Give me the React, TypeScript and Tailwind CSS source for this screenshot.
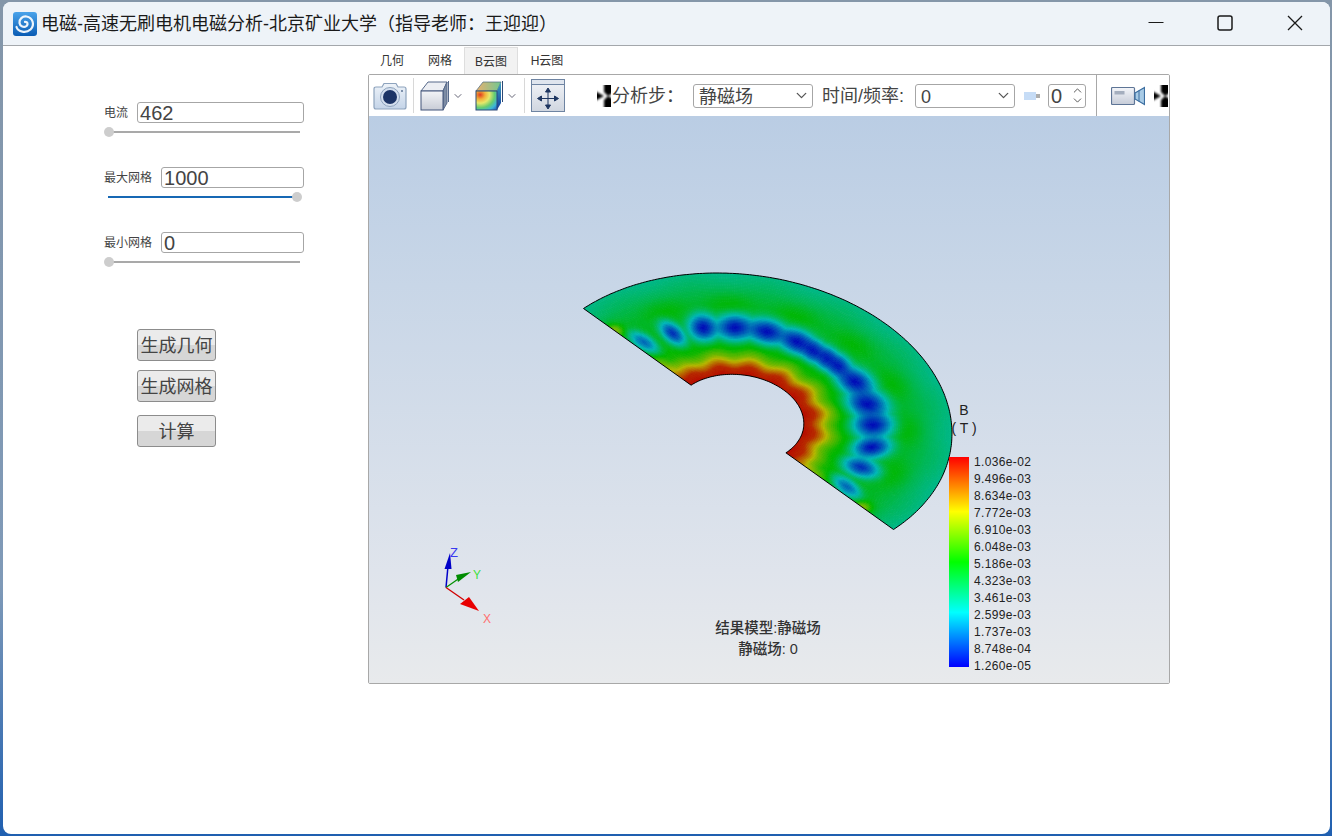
import React, { useMemo } from "react";
import { ChevronDown, ChevronUp } from "lucide-react";

const C = [738.5, 419];
const A = [155, 110.5];
const B = [146.8, -95.4];
const INNER = 0.306;

function pt(r: number, t: number): [number, number] {
  return [
    C[0] + r * (A[0] * Math.cos(t) + B[0] * Math.sin(t)),
    C[1] + r * (A[1] * Math.cos(t) + B[1] * Math.sin(t)),
  ];
}

const BLOBS: number[][] = [
  [846.7, 486.7, 15, 7.5, 35, 0.7],
  [861, 467.3, 18, 9.5, 15, 0.9],
  [871.7, 447.3, 19, 11, -6, 1],
  [872.7, 425, 20, 13, 0, 1],
  [867.3, 404, 21, 14, 14, 1],
  [855, 381.7, 20, 13, 26, 1],
  [838.3, 366, 15, 11, 35, 0.95],
  [826.7, 358.3, 14, 11, 35, 0.92],
  [813, 350.7, 15, 11, 30, 0.95],
  [796.7, 341.7, 19, 12, 20, 1],
  [766.7, 331.7, 20, 12.5, 12, 1],
  [735, 327.7, 19, 13, 3, 1],
  [703.3, 327.7, 15, 13, 25, 1],
  [672.7, 333.3, 15, 8.5, 40, 0.9],
  [644, 342.3, 15, 7, 32, 0.7],
];

const TABLE: number[][] = [
  [0.29, 0.98],
  [0.35, 0.94],
  [0.385, 0.82],
  [0.43, 0.65],
  [0.48, 0.53],
  [0.56, 0.47],
  [0.78, 0.44],
  [0.9, 0.37],
  [1.01, 0.31],
];

function lerpTable(x: number) {
  for (let i = 1; i < TABLE.length; i++) {
    if (x <= TABLE[i][0]) {
      const f = (x - TABLE[i - 1][0]) / (TABLE[i][0] - TABLE[i - 1][0]);
      return TABLE[i - 1][1] + Math.max(0, f) * (TABLE[i][1] - TABLE[i - 1][1]);
    }
  }
  return TABLE[TABLE.length - 1][1];
}

function field(r: number, t: number) {
  const wave = Math.cos(15.5 * t + 0.8);
  let v = lerpTable(r + 0.012 * wave);
  v += 0.06 * (0.5 + 0.5 * Math.cos(15.5 * t + 0.8)) * Math.exp(-Math.pow((r - 0.8) / 0.07, 2));
  const edge = Math.min(t, Math.PI - t);
  v += 0.14 * Math.exp(-Math.pow(edge / 0.07, 2)) * Math.exp(-Math.pow((r - 0.47) / 0.1, 2));
  v += 0.2 * Math.exp(-Math.pow(edge / 0.05, 2)) * Math.exp(-Math.pow((r - 0.8) / 0.04, 2));
  const [x, y] = pt(r, t);
  let halo = 1;
  let core = 1;
  for (const [bx, by, rx, ry, ang, amp] of BLOBS) {
    const c = Math.cos((ang * Math.PI) / 180);
    const s = Math.sin((ang * Math.PI) / 180);
    const dx = x - bx;
    const dy = y - by;
    const a = dx * c + dy * s;
    const b = -dx * s + dy * c;
    const d2 = (a * a) / (rx * rx) + (b * b) / (ry * ry);
    const dh2 = d2 / (1.3 * 1.3);
    halo = Math.min(halo, 1 - 0.42 * Math.exp(-dh2 * dh2));
    core *= 1 - 0.92 * amp * amp * Math.exp(-d2 / (0.8 * 0.8));
  }
  v *= halo * core;
  return Math.min(1, Math.max(0, v));
}

function jet(v: number) {
  let r = 0;
  let g = 0;
  let b = 0;
  if (v < 0.25) {
    g = v / 0.25;
    b = 1;
  } else if (v < 0.5) {
    g = 1;
    b = 1 - (v - 0.25) / 0.25;
  } else if (v < 0.75) {
    r = (v - 0.5) / 0.25;
    g = 1;
  } else {
    r = 1;
    g = 1 - (v - 0.75) / 0.25;
  }
  const L = 0.72;
  const h = (n: number) => Math.round(n * 255 * L).toString(16).padStart(2, "0");
  return `#${h(r)}${h(g)}${h(b)}`;
}

function FieldMesh() {
  const { groups, outline } = useMemo(() => {
    const NT = 260;
    const NR = 72;
    const LEVELS = 128;
    const buckets: string[] = new Array(LEVELS + 1).fill("");
    for (let i = 0; i < NT; i++) {
      const t0 = (i / NT) * Math.PI;
      const t1 = ((i + 1) / NT) * Math.PI;
      for (let j = 0; j < NR; j++) {
        const r0 = INNER + (j / NR) * (1 - INNER);
        const r1 = INNER + ((j + 1) / NR) * (1 - INNER);
        const v = field((r0 + r1) / 2, (t0 + t1) / 2);
        const q = Math.round(v * LEVELS);
        const p = [pt(r0, t0), pt(r1, t0), pt(r1, t1), pt(r0, t1)];
        buckets[q] += "M" + p.map((a) => `${a[0].toFixed(1)} ${a[1].toFixed(1)}`).join("L") + "Z";
      }
    }
    const pts: string[] = [];
    for (let i = 0; i <= 200; i++) {
      const a = pt(1, (i / 200) * Math.PI);
      pts.push(`${a[0].toFixed(1)} ${a[1].toFixed(1)}`);
    }
    for (let i = 100; i >= 0; i--) {
      const a = pt(INNER, (i / 100) * Math.PI);
      pts.push(`${a[0].toFixed(1)} ${a[1].toFixed(1)}`);
    }
    return {
      groups: buckets.map((d, q) => ({ d, c: jet(q / LEVELS) })).filter((g) => g.d),
      outline: "M" + pts.join("L") + "Z",
    };
  }, []);
  return (
    <svg className="absolute left-0 top-0" width={800} height={567} viewBox="369 116 800 567">
      <defs>
        <clipPath id="sector">
          <path d={outline} />
        </clipPath>
      </defs>
      <g clipPath="url(#sector)">
        {groups.map((g) => (
          <path key={g.c} d={g.d} fill={g.c} stroke={g.c} strokeWidth={0.7} />
        ))}
      </g>
      <path d={outline} fill="none" stroke="#000" strokeWidth={1} />
      {/* triad */}
      <path d="M446 587.5L448 566" stroke="#0000c8" strokeWidth={1.5} />
      <path d="M444.5 569L450 553L451.5 569Z" fill="#0000c8" />
      <path d="M446 587.5L461 577" stroke="#009000" strokeWidth={1.2} />
      <path d="M458 582L471 572L456 575Z" fill="#008c00" />
      <path d="M446 587.5L464 600" stroke="#d00000" strokeWidth={1.3} />
      <path d="M469 597L479 611L460 604Z" fill="#e80000" />
      <text x={450} y={557} fontSize={13} fill="#3a3af0">Z</text>
      <text x={473} y={579} fontSize={12} fill="#40e040">Y</text>
      <text x={483} y={623} fontSize={12} fill="#ff7070">X</text>
    </svg>
  );
}

function Slider({ full }: { full?: boolean }) {
  return (
    <div className="relative mt-[4px] flex h-[10px] w-[203px] items-center pl-[4px]">
      <div className={`h-[2px] ${full ? "w-[189px] bg-[#1768b4]" : "w-[192px] bg-[#a9a9a9]"}`} />
      <div className={`absolute top-0 h-[10px] w-[10px] rounded-full bg-[#cdcdcd] ${full ? "left-[188px]" : "left-0"}`} />
    </div>
  );
}

function Field({ label, value, full }: { label: string; value: string; full?: boolean }) {
  return (
    <div className="mb-[30px] w-[200px]">
      <div className="flex h-[21px] items-center gap-[9px]">
        <span className="text-[12px] text-[#444]">{label}</span>
        <div className="flex h-[21px] flex-1 items-center rounded-[3px] border border-[#a6a6a6] pl-[2px] text-[20px] leading-none text-[#444]">
          {value}
        </div>
      </div>
      <Slider full={full} />
    </div>
  );
}

function ActionButton({ children, className }: { children: React.ReactNode; className?: string }) {
  return (
    <div
      className={`ml-[33px] flex h-[32px] w-[79px] items-center justify-center rounded-[3px] border border-[#8c8c8c] bg-[linear-gradient(#ebebeb_50%,#d6d6d6_50%)] pt-[2px] text-[18px] text-[#444] ${className ?? ""}`}
    >
      {children}
    </div>
  );
}

function Logo() {
  return (
    <svg width={24} height={24} viewBox="0 0 24 24">
      <defs>
        <linearGradient id="lg" x1="0" y1="0" x2="0" y2="1">
          <stop offset="0" stopColor="#4aa3ea" />
          <stop offset="1" stopColor="#0a5cb4" />
        </linearGradient>
      </defs>
      <rect width={24} height={24} rx={3} fill="url(#lg)" />
      <path
        d="M3.5 15C5 20 13 21.5 17.5 17.5C22 13 20 5.5 13.5 4.5C9.5 4 6 7 6.5 11C7 14.5 11 16 13.5 14C15.5 12.5 14.5 9.5 12 9.8"
        fill="none"
        stroke="#fff"
        strokeWidth={2.2}
        strokeLinecap="round"
        opacity={0.92}
      />
    </svg>
  );
}

function Flicker({ id }: { id: string }) {
  return (
    <svg width={14} height={22} viewBox="0 0 14 22" className="shrink-0">
      <defs>
        <filter id={id}>
          <feGaussianBlur stdDeviation={0.9} />
        </filter>
      </defs>
      <rect width={14} height={22} fill="#fff" />
      <g filter={`url(#${id})`}>
        <path d="M7 -2H16V8L11 11L7 7Z" fill="#000" />
        <path d="M-2 6L7 11L-2 16Z" fill="#000" />
        <path d="M7 24H16V14L11 11L7 15Z" fill="#000" />
      </g>
    </svg>
  );
}

function CameraIcon() {
  return (
    <svg width={34} height={28} viewBox="0 0 34 28" className="shrink-0">
      <defs>
        <linearGradient id="cam" x1="0" y1="0" x2="0" y2="1">
          <stop offset="0" stopColor="#eef3f9" />
          <stop offset="1" stopColor="#c4d4e8" />
        </linearGradient>
      </defs>
      <path
        d="M3 5H9L11 1.5H23L25 5H31Q33 5 33 7V25Q33 27 31 27H3Q1 27 1 25V7Q1 5 3 5Z"
        fill="url(#cam)"
        stroke="#8ea3bd"
        strokeWidth={1.2}
      />
      <circle cx={17} cy={15} r={9.5} fill="#d4dfee" stroke="#8ea3bd" />
      <circle cx={17} cy={15} r={7} fill="#1d3566" />
      <circle cx={29} cy={9} r={1} fill="#5c7394" />
    </svg>
  );
}

function CubeIcon() {
  return (
    <svg width={29} height={30} viewBox="0 0 29 30" className="shrink-0">
      <defs>
        <linearGradient id="cube" x1="0" y1="0" x2="0" y2="1">
          <stop offset="0" stopColor="#f3f4f7" />
          <stop offset="1" stopColor="#c8ccd6" />
        </linearGradient>
      </defs>
      <path d="M1 10L8 1H27L23 10Z" fill="#eceef3" stroke="#56698a" />
      <path d="M23 10L27 1V22L23 29Z" fill="#7d8ca4" stroke="#56698a" />
      <rect x={1} y={10} width={22} height={19} fill="url(#cube)" stroke="#42557a" />
      <path d="M28.5 0V21" stroke="#56698a" strokeWidth={1} />
    </svg>
  );
}

function FieldCubeIcon() {
  return (
    <svg width={28} height={30} viewBox="0 0 28 30" className="shrink-0">
      <defs>
        <radialGradient id="jetr" cx="0.2" cy="0.2" r="1.05">
          <stop offset="0" stopColor="#e03a20" />
          <stop offset="0.22" stopColor="#f2b03a" />
          <stop offset="0.42" stopColor="#e6e86a" />
          <stop offset="0.65" stopColor="#66cc70" />
          <stop offset="0.85" stopColor="#3bb6d8" />
          <stop offset="1" stopColor="#2a70c8" />
        </radialGradient>
        <linearGradient id="jets" x1="0" y1="0" x2="0" y2="1">
          <stop offset="0" stopColor="#3aa0c0" />
          <stop offset="1" stopColor="#143c9c" />
        </linearGradient>
        <linearGradient id="jett" x1="0" y1="0" x2="1" y2="0">
          <stop offset="0" stopColor="#e8b070" />
          <stop offset="1" stopColor="#70c890" />
        </linearGradient>
      </defs>
      <path d="M1 10L8 1H26L22 10Z" fill="url(#jett)" stroke="#4a6a80" strokeWidth={0.7} />
      <path d="M22 10L26 1V22L22 29Z" fill="url(#jets)" />
      <rect x={1} y={10} width={21} height={19} fill="url(#jetr)" stroke="#2d4a76" />
      <path d="M27.5 0V21" stroke="#2d4a76" strokeWidth={1} />
    </svg>
  );
}

function PanIcon() {
  return (
    <svg width={34} height={33} viewBox="0 0 34 33" className="shrink-0">
      <defs>
        <linearGradient id="pan" x1="0" y1="0" x2="0" y2="1">
          <stop offset="0" stopColor="#f2f4f8" />
          <stop offset="1" stopColor="#d0d6e0" />
        </linearGradient>
      </defs>
      <rect x={0.5} y={0.5} width={33} height={32} fill="url(#pan)" stroke="#6e84a2" />
      <rect x={0.5} y={0.5} width={33} height={5} fill="#dfe5ee" stroke="#6e84a2" />
      <g fill="#1d3560" stroke="#1d3560" strokeWidth={1}>
        <path d="M17 13V26M11 19.5H23" fill="none" />
        <path d="M17 9L14.5 13H19.5Z" />
        <path d="M17 30L14.5 26H19.5Z" />
        <path d="M6.5 19.5L10.5 17V22Z" />
        <path d="M27.5 19.5L23.5 17V22Z" />
      </g>
    </svg>
  );
}

function VideoIcon() {
  return (
    <svg width={34} height={20} viewBox="0 0 34 20" className="shrink-0">
      <defs>
        <linearGradient id="vid" x1="0" y1="0" x2="0" y2="1">
          <stop offset="0" stopColor="#f4f6fa" />
          <stop offset="1" stopColor="#c6ccd8" />
        </linearGradient>
      </defs>
      <rect x={0.5} y={1.5} width={23} height={17} rx={1} fill="url(#vid)" stroke="#5e7596" strokeWidth={1.2} />
      <rect x={3.5} y={5} width={10} height={3.5} fill="#a4aebe" />
      <path d="M24 7L33.5 1.5V18.5L24 13Z" fill="#a8cbe6" stroke="#3c6ea0" strokeWidth={1.2} />
      <path d="M28 4.5V15.5" stroke="#3c6ea0" />
    </svg>
  );
}

function Sep({ className }: { className: string }) {
  return <div className={`h-[35px] w-px shrink-0 bg-[#d8d8d8] ${className}`} />;
}

function SelectBox({ value, className }: { value: string; className: string }) {
  return (
    <div
      className={`flex h-[24px] shrink-0 items-center justify-between rounded-[3px] border border-[#a6a6a6] pl-[5px] pr-[2px] text-[18px] leading-none text-[#444] ${className}`}
    >
      <span className="pt-[2px]">{value}</span>
      <ChevronDown size={17} color="#555" strokeWidth={1.8} />
    </div>
  );
}

const LEGEND = [
  "1.036e-02",
  "9.496e-03",
  "8.634e-03",
  "7.772e-03",
  "6.910e-03",
  "6.048e-03",
  "5.186e-03",
  "4.323e-03",
  "3.461e-03",
  "2.599e-03",
  "1.737e-03",
  "8.748e-04",
  "1.260e-05",
];

export default function App() {
  return (
    <div className="h-[836px] w-[1332px] overflow-hidden bg-[linear-gradient(#8496a9,#7f9ab8_70%,#1f5fb0)] pb-[2px] pl-[3px] pr-[2px] pt-[2px] [font-family:'Liberation_Sans','Noto_Sans_CJK_SC',sans-serif]">
      <div className="flex h-full flex-col overflow-hidden rounded-[8px] bg-white">
        {/* title bar */}
        <div className="flex h-[44px] shrink-0 items-center border-b border-[#a3a7ab] bg-[#eef3f8]">
          <div className="ml-[10px] flex items-center gap-[4px]">
            <Logo />
            <span className="text-[18px] leading-none text-[#1a1a1a]">
              电磁-高速无刷电机电磁分析-北京矿业大学（指导老师：王迎迎）
            </span>
          </div>
          <div className="ml-auto flex h-full items-center pb-[2px]">
            <div className="flex h-full w-[67px] items-center justify-center">
              <svg width={16} height={16} viewBox="0 0 16 16">
                <path d="M0.5 7.5H15.5" stroke="#1a1a1a" strokeWidth={1.2} />
              </svg>
            </div>
            <div className="flex h-full w-[71px] items-center justify-center">
              <svg width={16} height={16} viewBox="0 0 16 16">
                <rect x={1} y={1} width={14} height={14} rx={2} fill="none" stroke="#1a1a1a" strokeWidth={1.5} />
              </svg>
            </div>
            <div className="flex h-full w-[70px] items-center justify-center">
              <svg width={16} height={16} viewBox="0 0 16 16">
                <path d="M1 1L15 15M15 1L1 15" stroke="#1a1a1a" strokeWidth={1.3} />
              </svg>
            </div>
          </div>
        </div>

        {/* body */}
        <div className="flex flex-1">
          <div className="w-[365px] shrink-0 pl-[101px] pt-[56px]">
            <Field label="电流" value="462" />
            <Field label="最大网格" value="1000" full />
            <Field label="最小网格" value="0" />
            <ActionButton className="mt-[62px]">生成几何</ActionButton>
            <ActionButton className="mt-[9px]">生成网格</ActionButton>
            <ActionButton className="mt-[13px]">计算</ActionButton>
          </div>

          <div className="w-[802px] shrink-0 pt-[1px]">
            <div className="flex h-[27px] items-center text-[12px] text-[#333]">
              <div className="flex h-full w-[48px] items-center justify-center pt-[1px]">几何</div>
              <div className="flex h-full w-[48px] items-center justify-center pt-[1px]">网格</div>
              <div className="flex h-full w-[54px] items-center justify-center border border-b-0 border-[#dedede] bg-[#f2f2f2] pt-[1px]">
                B云图
              </div>
              <div className="flex h-full w-[58px] items-center justify-center pt-[1px]">H云图</div>
            </div>
            <div className="h-[610px] overflow-hidden rounded-[2px] border border-[#a8a8a8]">
              {/* toolbar */}
              <div className="flex h-[41px] items-center overflow-hidden bg-white text-[18px] text-[#444]">
                <div className="ml-[4px]">
                  <CameraIcon />
                </div>
                <Sep className="ml-[6px]" />
                <div className="ml-[6px]">
                  <CubeIcon />
                </div>
                <ChevronDown className="ml-[3px] shrink-0" size={12} color="#667" strokeWidth={2} />
                <div className="ml-[11px]">
                  <FieldCubeIcon />
                </div>
                <ChevronDown className="ml-[3px] shrink-0" size={12} color="#667" strokeWidth={2} />
                <Sep className="ml-[6px]" />
                <div className="ml-[6px]">
                  <PanIcon />
                </div>
                <div className="ml-[32px]">
                  <Flicker id="fl1" />
                </div>
                <span className="ml-[1px] w-[81px] shrink-0 whitespace-nowrap pt-[2px]">分析步：</span>
                <SelectBox value="静磁场" className="w-[120px]" />
                <span className="ml-[9px] w-[93px] shrink-0 whitespace-nowrap pt-[2px]">时间/频率:</span>
                <SelectBox value="0" className="w-[100px]" />
                <div className="ml-[9px] flex shrink-0 items-center">
                  <div className="h-[8px] w-[12px] bg-[#c6dcf6]" />
                  <div className="h-[4px] w-[4px] bg-[#adadad]" />
                </div>
                <div className="ml-[8px] flex h-[24px] w-[38px] shrink-0 items-center justify-between rounded-[3px] border border-[#a6a6a6] pl-[2px] pr-[1px] text-[20px] leading-none">
                  <span>0</span>
                  <div className="flex flex-col">
                    <ChevronUp className="mb-[-2px]" size={13} color="#555" strokeWidth={1.8} />
                    <ChevronDown className="mt-[-1px]" size={13} color="#555" strokeWidth={1.8} />
                  </div>
                </div>
                <Sep className="ml-[10px] !h-[41px] !bg-[#a8a8a8]" />
                <div className="ml-[14px]">
                  <VideoIcon />
                </div>
                <div className="ml-[9px]">
                  <Flicker id="fl2" />
                </div>
              </div>

              {/* viewport */}
              <div className="relative h-[567px] bg-[linear-gradient(#bacde4,#c8d6e7_30%,#dfe4ec_80%,#e8eaec)]">
                <FieldMesh />
                <div className="absolute left-[577px] top-[285px] flex w-[36px] flex-col items-center text-[14px] leading-[18px] text-[#222]">
                  <span>B</span>
                  <span className="whitespace-pre">( T )</span>
                </div>
                <div className="absolute left-[580px] top-[341px] flex">
                  <div className="h-[210px] w-[20px] bg-[linear-gradient(#ff0000,#ffff00_26%,#00ff00_50%,#00ffff_74%,#0000ff)]" />
                  <div className="ml-[5px] mt-[-3px] flex flex-col text-[12px] leading-[16.98px] tracking-[0.35px] text-[#222]">
                    {LEGEND.map((l) => (
                      <span key={l}>{l}</span>
                    ))}
                  </div>
                </div>
                <div className="absolute left-[319px] top-[502px] flex w-[160px] flex-col items-center text-[14.5px] font-medium leading-[21px] text-[#333]">
                  <span>结果模型:静磁场</span>
                  <span>静磁场: 0</span>
                </div>
              </div>
            </div>
          </div>
        </div>
      </div>
    </div>
  );
}
